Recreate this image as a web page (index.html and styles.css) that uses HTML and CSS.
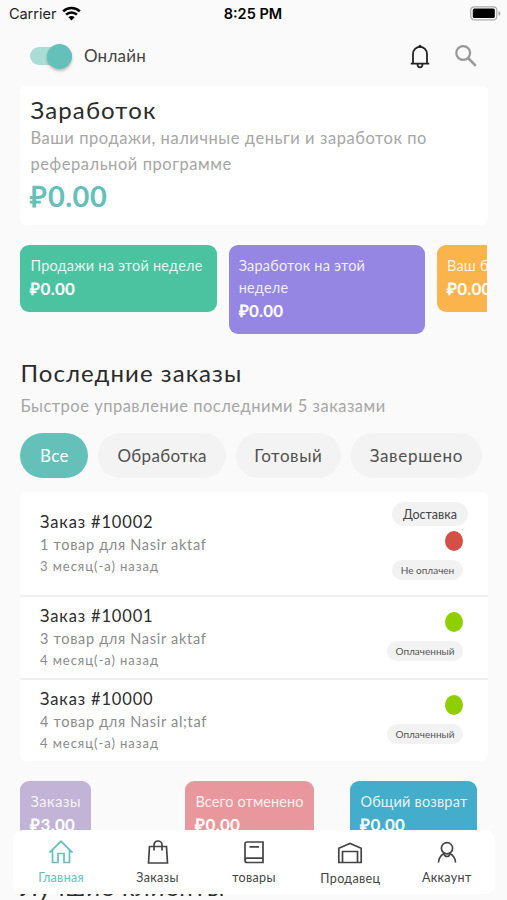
FILE: index.html
```html
<!DOCTYPE html>
<html lang="ru">
<head>
    <meta charset="UTF-8">
    <meta name="viewport" content="width=device-width, initial-scale=1.0">
    <title>Заработок</title>
    <link rel="stylesheet" href="styles.css">
</head>
<body>
    <div class="screen">
        <div class="status-bar">
            <div class="carrier">
                <span>Carrier</span>
                <svg width="19" height="15" viewBox="0 0 19 15" fill="none" stroke="#000" stroke-width="2.5">
                    <path d="M1.2 5.3a11.8 11.8 0 0 1 16.6 0"/>
                    <path d="M4.1 8.6a7.7 7.7 0 0 1 10.8 0"/>
                    <path d="M6.4 11.2a4.4 4.4 0 0 1 6.2 0L9.5 14.4z" fill="#000" stroke="none"/>
                </svg>
            </div>
            <span class="time">8:25 PM</span>
            <svg width="31" height="15" viewBox="0 0 31 15">
                <rect x=".8" y=".8" width="26" height="13" rx="3.5" fill="#fff" stroke="#aaa" stroke-width="1.2"/>
                <rect x="2.8" y="2.5" width="22" height="9.6" rx="1.5" fill="#000"/>
                <path d="M28.5 5v4.8c2.6-1 2.6-3.8 0-4.8z" fill="#aaa"/>
            </svg>
        </div>

        <header class="header">
            <span class="switch"><span class="knob"></span></span>
            <span class="online">Онлайн</span>
            <svg class="bell" width="20" height="25" viewBox="0 0 20 25" fill="none" stroke="#222" stroke-width="1.8">
                <path d="M.8 19.6h18.4M3 19.5V10.2a7 7.4 0 0 1 14 0V19.5M7.5 20.5c.2 3.7 4.8 3.7 5 0"/>
                <circle cx="10" cy="2.2" r="1.5" fill="#222" stroke="none"/>
            </svg>
            <svg class="search" width="22" height="22" viewBox="0 0 22 22" fill="none" stroke="#999" stroke-width="2.2">
                <circle cx="8.2" cy="8" r="6.9"/>
                <path d="M13 13l7.8 7.8" stroke-width="2.6"/>
            </svg>
        </header>

        <section class="earnings">
            <h1>Заработок</h1>
            <p>Ваши продажи, наличные деньги и заработок по реферальной программе</p>
            <div class="total">₽0.00</div>
        </section>

        <section class="week">
            <div class="stat green">
                <span class="label">Продажи на этой неделе</span>
                <b>₽0.00</b>
            </div>
            <div class="stat purple">
                <span class="label">Заработок на этой неделе</span>
                <b>₽0.00</b>
            </div>
            <div class="stat orange">
                <span class="label">Ваш баланс</span>
                <b>₽0.00</b>
            </div>
        </section>

        <section class="last-orders">
            <h2>Последние заказы</h2>
            <p>Быстрое управление последними 5 заказами</p>
            <div class="chips">
                <span class="chip active">Все</span>
                <span class="chip processing">Обработка</span>
                <span class="chip ready">Готовый</span>
                <span class="chip done">Завершено</span>
            </div>
        </section>

        <section class="orders">
            <div class="order first">
                <div class="info">
                    <h3>Заказ #10002</h3>
                    <p class="who">1 товар для Nasir aktaf</p>
                    <p class="when">3 месяц(-а) назад</p>
                </div>
                <div class="state">
                    <span class="delivery">Доставка</span>
                    <span class="dot red"></span>
                    <span class="badge unpaid">Не оплачен</span>
                </div>
            </div>
            <div class="order">
                <div class="info">
                    <h3>Заказ #10001</h3>
                    <p class="who">3 товар для Nasir aktaf</p>
                    <p class="when">4 месяц(-а) назад</p>
                </div>
                <div class="state">
                    <span class="dot"></span>
                    <span class="badge">Оплаченный</span>
                </div>
            </div>
            <div class="order">
                <div class="info">
                    <h3>Заказ #10000</h3>
                    <p class="who">4 товар для Nasir al;taf</p>
                    <p class="when">4 месяц(-а) назад</p>
                </div>
                <div class="state">
                    <span class="dot"></span>
                    <span class="badge">Оплаченный</span>
                </div>
            </div>
        </section>

        <section class="totals">
            <div class="stat lilac">
                <span class="label">Заказы</span>
                <b>₽3.00</b>
            </div>
            <div class="stat pink">
                <span class="label">Всего отменено</span>
                <b>₽0.00</b>
            </div>
            <div class="stat blue">
                <span class="label">Общий возврат</span>
                <b>₽0.00</b>
            </div>
        </section>

        <h2 class="clients">Лучшие клиенты</h2>

        <nav class="tabs">
            <a class="tab current">
                <svg width="26" height="26" viewBox="0 0 26 26">
                    <path d="M4.500 11.500V23.500H10V14.500H16V23.500H21.500V11.500M1.500 13.600L13 2.300l11.500 11.300"/>
                </svg>
                <span>Главная</span>
            </a>
            <a class="tab">
                <svg width="26" height="26" viewBox="0 0 26 26">
                    <path d="M4.5 7.5h17L22.5 24H3.5zM9 11.5V6a4 4 0 0 1 8 0v5.5"/>
                </svg>
                <span>Заказы</span>
            </a>
            <a class="tab">
                <svg width="26" height="26" viewBox="0 0 26 26">
                    <path d="M22 23.5H6a2 2 0 0 1-2-2V5a2 2 0 0 1 2-2h16zM4 21.5c0-1.5.9-2.3 2-2.3h16M8.5 7.8H18"/>
                </svg>
                <span>товары</span>
            </a>
            <a class="tab">
                <svg width="26" height="26" viewBox="0 0 26 26">
                    <path d="M1.8 23.5V9.2L13 4.5l11.2 4.7v14.3zM5.5 23.5V12.5h15v11"/>
                </svg>
                <span class="seller">Продавец</span>
            </a>
            <a class="tab">
                <svg width="26" height="26" viewBox="0 0 26 26">
                    <circle cx="13" cy="9.2" r="5.6"/>
                    <path d="M4.5 23.5c.2-4.500 2.500-7.500 6-9.200M21.500 23.500c-.2-4.500-2.500-7.500-6-9.200M9.800 14.500c1 4 5.400 4 6.400 0"/>
                </svg>
                <span>Аккаунт</span>
            </a>
        </nav>
    </div>
</body>
</html>
```
FILE: styles.css
```css
* {
    box-sizing: border-box;
}

body {
    margin: 0;
    font-family: Lato, "Open Sans", sans-serif;
    background-color: #fafafa;
    color: #2b2b2b;
}

h1, h2, h3, p {
    margin: 0;
    font-weight: 400;
}

.screen {
    position: relative;
    width: 507px;
    height: 900px;
    overflow: hidden;
    padding: 0 20px 0 20.4px;
}

.status-bar {
    display: grid;
    grid-template-columns: 1fr auto 1fr;
    align-items: center;
    height: 27px;
    margin: 0 -13px 0 -11.5px;
    font-family: Inter, sans-serif;
    font-size: 14.5px;
    color: #222;
}

.status-bar > svg {
    justify-self: end;
    margin-right: -1px;
}

.carrier {
    display: flex;
    align-items: center;
    gap: 6px;
}

.time {
    font-weight: 600;
    color: #000;
    margin-right: 3px;
}

.header {
    display: flex;
    align-items: center;
    height: 58px;
    margin-bottom: 1px;
    padding: 0 10px 0 9.6px;
}

.switch {
    display: flex;
    justify-content: flex-end;
    align-items: center;
    width: 42px;
    height: 18px;
    border-radius: 9px;
    background-color: #a9ded7;
}

.knob {
    width: 25px;
    height: 25px;
    border-radius: 50%;
    background-color: #64c0b8;
    box-shadow: 0 2px 3px rgba(0, 0, 0, 0.25);
}

.online {
    flex: 1;
    margin-left: 12px;
    font-size: 17px;
    line-height: 22px;
    letter-spacing: 0.2px;
    color: #444;
}

.bell {
    margin-right: 25px;
}

.earnings {
    height: 139px;
    padding: 8px 10px;
    margin-right: -1px;
    border-radius: 6px;
    background-color: #fff;
}

.earnings h1 {
    font-size: 24px;
    line-height: 32px;
    letter-spacing: 1.15px;
}

.earnings p {
    font-size: 16.5px;
    line-height: 25.5px;
    letter-spacing: 0.55px;
    color: #a6a6a6;
}

.total {
    font-size: 29px;
    font-weight: 700;
    line-height: 38px;
    letter-spacing: 0.5px;
    color: #64c0b8;
}

.week {
    display: flex;
    align-items: flex-start;
    gap: 12px;
    margin-top: 20px;
    height: 89px;
    overflow: hidden;
}

.stat {
    display: flex;
    flex-direction: column;
    padding: 10px 10px 12px;
    border-radius: 9px;
    color: #fff;
}

.week .stat {
    flex: 0 0 196.3px;
}

.stat .label {
    font-size: 14.5px;
    line-height: 22px;
    letter-spacing: 0.2px;
    color: rgba(255, 255, 255, 0.88);
}

.stat b {
    font-size: 17px;
    line-height: 23px;
    letter-spacing: 0.2px;
}

.green {
    background-color: #4bc2a0;
}

.purple {
    background-color: #9586e4;
}

.orange {
    background-color: #fab44b;
}

.lilac {
    background-color: #c1b4d6;
}

.pink {
    background-color: #e8989c;
}

.blue {
    background-color: #43adcb;
}

.last-orders {
    padding-top: 21px;
    height: 158px;
}

.last-orders h2, .clients {
    font-size: 24px;
    line-height: 35px;
    letter-spacing: 1.05px;
}

.last-orders p {
    font-size: 16.5px;
    line-height: 32px;
    letter-spacing: 0.5px;
    color: #a6a6a6;
}

.chips {
    display: flex;
    gap: 10px;
    margin-top: 11px;
}

.chip {
    display: flex;
    justify-content: center;
    align-items: center;
    width: 68px;
    height: 45px;
    border-radius: 23px;
    background-color: #f3f3f3;
    font-size: 17px;
    letter-spacing: 0.3px;
    color: #505050;
}

.chip.active {
    background-color: #64c0b8;
    color: #fff;
}

.chip.processing {
    width: 127.5px;
}

.chip.ready {
    width: 105px;
    letter-spacing: 0.6px;
}

.chip.done {
    width: 131px;
    letter-spacing: 0.7px;
}

.orders {
    margin-right: -1px;
    border-radius: 6px;
    background-color: #fff;
}

.order {
    display: flex;
    justify-content: space-between;
    height: 83px;
    padding: 7px 20px 0 19.6px;
}

.order + .order {
    border-top: 2px solid #f0f0f0;
}

.order.first {
    height: 103px;
    padding-top: 18px;
}

.order h3 {
    font-size: 16.5px;
    line-height: 24px;
    letter-spacing: 0.85px;
}

.who {
    font-size: 14.5px;
    line-height: 22px;
    letter-spacing: 0.7px;
    color: #8a8a8a;
}

.when {
    font-size: 13px;
    line-height: 21px;
    letter-spacing: 0.95px;
    color: #8a8a8a;
}

.state {
    display: flex;
    flex-direction: column;
    align-items: flex-end;
    padding: 8px 5px 0 0;
}

.first .state {
    padding-top: 0;
    margin-top: -8px;
}

.delivery {
    width: 76px;
    height: 24px;
    margin: 0 -5px 5px 0;
    border-radius: 12px;
    background-color: #f2f2f2;
    font-size: 12.5px;
    line-height: 25px;
    text-align: center;
    color: #444;
}

.dot {
    width: 18px;
    height: 20px;
    border-radius: 50%;
    background-color: #8fce00;
}

.dot.red {
    background-color: #d25046;
}

.badge {
    width: 76px;
    height: 20px;
    margin-top: 9px;
    border-radius: 10px;
    background-color: #f2f2f2;
    font-size: 10px;
    line-height: 20px;
    text-align: center;
    color: #555;
}

.badge.unpaid {
    width: 71px;
}

.totals {
    display: grid;
    grid-template-columns: 165px 165px auto;
    justify-content: start;
    justify-items: start;
    margin-top: 20px;
}

.lilac .label {
    letter-spacing: 0.6px;
}

.pink .label {
    letter-spacing: 0.12px;
}

.clients {
    margin-top: 21px;
    white-space: nowrap;
}

.tabs {
    position: absolute;
    left: 13px;
    right: 12px;
    bottom: 6px;
    display: grid;
    grid-template-columns: repeat(5, 1fr);
    height: 64px;
    border-radius: 10px;
    background-color: #fff;
}

.tab {
    display: flex;
    flex-direction: column;
    align-items: center;
    padding-top: 9px;
    font-size: 12.5px;
    line-height: 25px;
    letter-spacing: 0.35px;
    color: #444;
}

.tab svg {
    fill: none;
    stroke: currentColor;
    stroke-width: 1.7;
}

.tab.current {
    color: #64c0b8;
}

.seller {
    line-height: 27px;
}
```
